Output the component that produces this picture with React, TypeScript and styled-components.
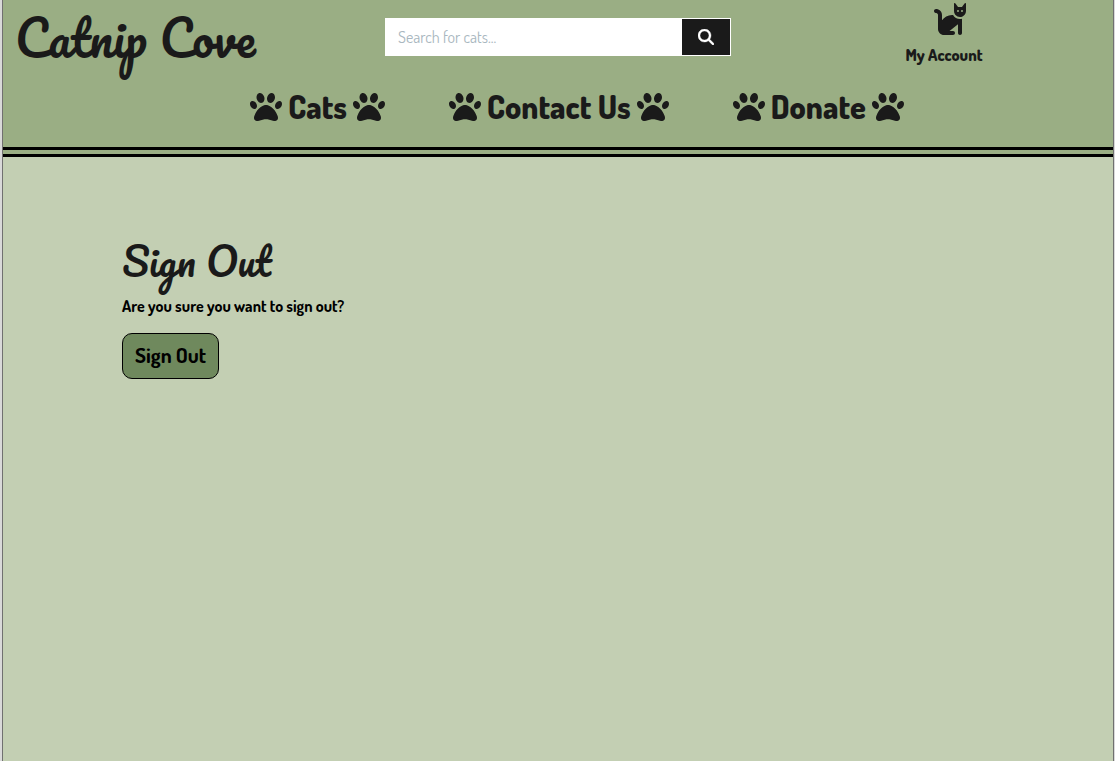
import React from "react";
import styled, { createGlobalStyle } from "styled-components";
import { FaCat, FaMagnifyingGlass, FaPaw } from "react-icons/fa6";

const ink = "#1a1a1a";
const script = `Pacifico, "Liberation Serif", cursive`;
const body = `Dosis, Lato, sans-serif`;

const GlobalStyle = createGlobalStyle`
  *, *::before, *::after { box-sizing: border-box; }
  body {
    margin: 0;
    background: #d9d9d9;
    font-family: ${body};
    color: #000;
  }
  h1, p { margin: 0; }
  a { color: inherit; text-decoration: none; }
`;

const Page = styled.div`
  min-height: 100vh;
  margin: 0 1px 0 2px;
  border: solid #707070;
  border-width: 0 1px;
  background: #c3cfb3;
`;

const Header = styled.header`
  background: #9aae84;
  color: ${ink};
  border-bottom: 10px double #000;
`;

const TopBar = styled.div`
  display: grid;
  grid-template-columns: 1fr 1fr 1fr;
  height: 83px;
`;

const Logo = styled.a`
  padding-left: 12px;
  font: 400 48px/76px ${script};
  white-space: nowrap;
`;

const Search = styled.form`
  display: flex;
  width: 346px;
  height: 38px;
  margin: 18px 0 0 12px;
  border: 1px solid #fff;
  background: #fff;
`;

const SearchInput = styled.input`
  flex: 1;
  min-width: 0;
  padding: 0 12px;
  border: 0;
  background: #fff;
  font: 400 16px/24px ${body};
  color: ${ink};
  outline: none;
  &::placeholder { color: #a9b7c0; opacity: 1; }
`;

const SearchButton = styled.button`
  display: flex;
  align-items: center;
  justify-content: center;
  width: 48px;
  padding: 0;
  border: 0;
  background: ${ink};
  color: #fff;
  font-size: 16px;
  svg { stroke: currentColor; stroke-width: 12px; }
`;

const Account = styled.a`
  display: flex;
  flex-direction: column;
  align-items: center;
  justify-self: center;
  margin-left: 32px;
  padding-top: 1px;
  font-size: 16px;
  font-weight: 800;
  line-height: 24px;
  svg { width: 36px; height: 36px; margin: 0 0 6px 12px; }
`;

const Nav = styled.nav`
  display: flex;
  justify-content: center;
  gap: 64px;
  height: 64px;
  padding-left: 38px;
`;

const NavLink = styled.a`
  display: flex;
  align-items: center;
  gap: 6px;
  height: 48px;
  font-size: 32px;
  font-weight: 800;
  line-height: 40px;
  white-space: nowrap;
  svg { font-size: 32px; }
`;

const Main = styled.main`
  padding: 71px 119px;
`;

const Title = styled.h1`
  font: 400 39px/66px ${script};
  color: ${ink};
`;

const Question = styled.p`
  font-size: 16px;
  font-weight: 700;
  line-height: 24px;
`;

const SignOutButton = styled.button`
  height: 46px;
  margin-top: 15px;
  padding: 0 12px 2px;
  border: 1px solid #000;
  border-radius: 10px;
  background: #6f895d;
  color: #000;
  font: 700 21px/24px ${body};
`;

const links = ["Cats", "Contact Us", "Donate"];

export default function App() {
  return (
    <>
      <GlobalStyle />
      <Page>
        <Header>
          <TopBar>
            <Logo href="#">Catnip Cove</Logo>
            <Search onSubmit={(e) => e.preventDefault()}>
              <SearchInput type="text" aria-label="Search for cats" placeholder="Search for cats..." />
              <SearchButton type="submit" aria-label="Search">
                <FaMagnifyingGlass />
              </SearchButton>
            </Search>
            <Account href="#">
              <FaCat />
              My Account
            </Account>
          </TopBar>
          <Nav>
            {links.map((label) => (
              <NavLink href="#" key={label}>
                <FaPaw />
                {label}
                <FaPaw />
              </NavLink>
            ))}
          </Nav>
        </Header>
        <Main>
          <Title>Sign Out</Title>
          <Question>Are you sure you want to sign out?</Question>
          <SignOutButton type="button">Sign Out</SignOutButton>
        </Main>
      </Page>
    </>
  );
}
